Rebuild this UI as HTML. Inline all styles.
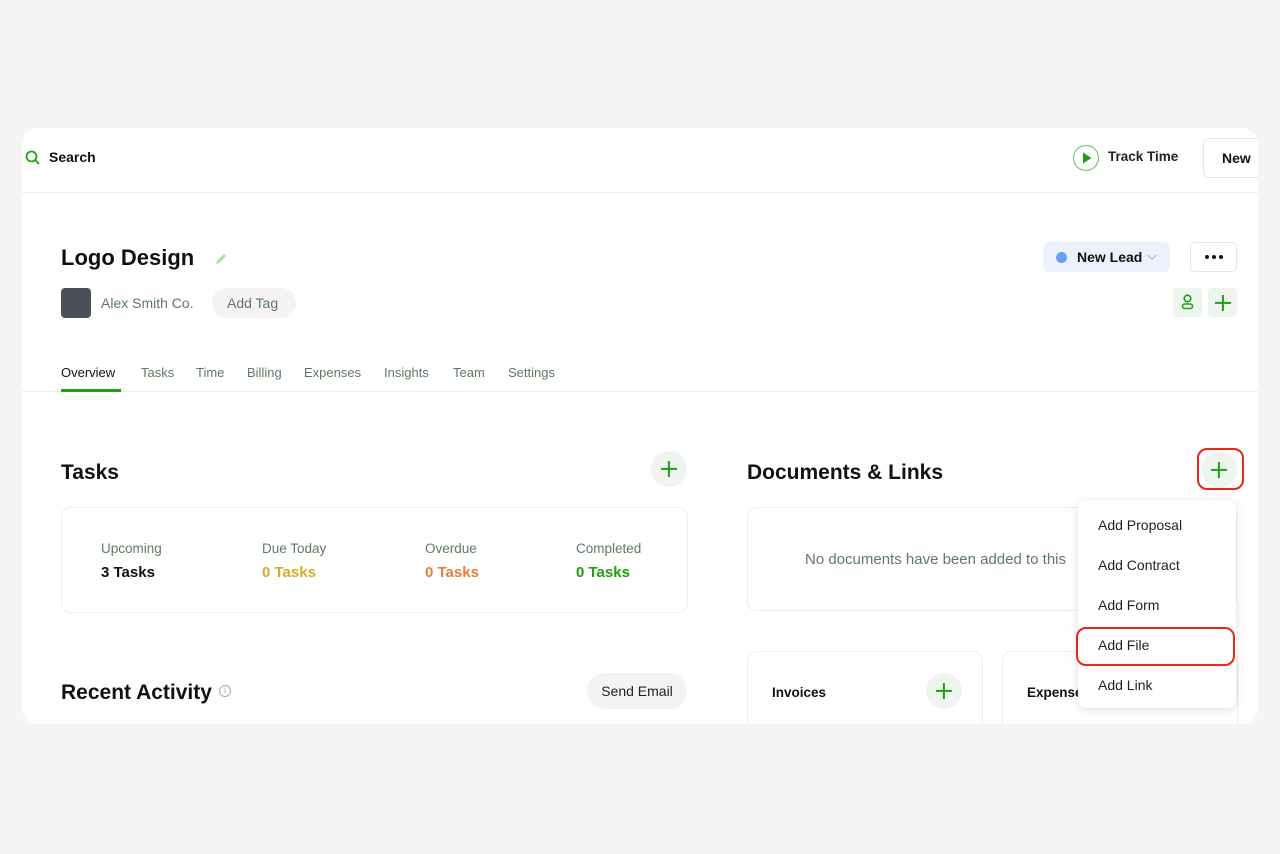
<!DOCTYPE html>
<html><head><style>
*{box-sizing:border-box;margin:0;padding:0}
body{width:1280px;height:854px;background:#f6f5f3;font-family:"Liberation Sans",sans-serif;position:relative;overflow:hidden;color:#111}
.a{position:absolute}
.card{left:22px;top:128px;width:1236px;height:596px;background:#fff;border-radius:16px;overflow:hidden}
.t{white-space:nowrap}
.g{color:#5e7a62}
.plus{border-radius:50%;background:#eef4ee;width:36px;height:36px}
.plus:before,.plus:after{content:"";position:absolute;background:#1fa012;left:50%;top:50%;transform:translate(-50%,-50%)}
.plus:before{width:16px;height:2.2px}.plus:after{width:2.2px;height:16px}
.box{border:1px solid #ececec;border-radius:10px;background:#fff}
.mi{left:20px;font-size:14px;color:#222}
</style></head><body>
<div class="a card">
 <svg class="a" style="left:3px;top:22px" width="16" height="16" viewBox="0 0 16 16"><circle cx="6.5" cy="6.5" r="5" fill="none" stroke="#1fa012" stroke-width="1.8"/><path d="M10 10l4 4" stroke="#1fa012" stroke-width="1.8"/></svg>
 <div class="a t" style="left:27px;top:21px;font-size:14px;font-weight:bold">Search</div>
 <svg class="a" style="left:1050px;top:16px" width="28" height="28" viewBox="0 0 28 28"><circle cx="14" cy="14" r="12.5" fill="none" stroke="#7dcb7a" stroke-width="1.3"/><path d="M11 8.5v11l8.5-5.5z" fill="#1fa012"/></svg>
 <div class="a t" style="left:1086px;top:21px;font-size:13.5px;font-weight:bold;color:#222">Track Time</div>
 <div class="a" style="left:1181px;top:10px;width:70px;height:40px;border:1px solid #e6e6e6;border-radius:6px;padding:11px 0 0 18px;font-size:14px;font-weight:bold">New</div>
 <div class="a" style="left:0;top:64px;width:1236px;height:1px;background:#eeeeee"></div>
 <div class="a t" style="left:39px;top:117px;font-size:22px;font-weight:bold">Logo Design</div>
 <svg class="a" style="left:192px;top:124px" width="14" height="14" viewBox="0 0 14 14"><path d="M2 12l1-3 7-7 2 2-7 7z" fill="#a8dca4"/></svg>
 <div class="a" style="left:39px;top:160px;width:30px;height:30px;background:#4b5058;border-radius:4px"></div>
 <div class="a t g" style="left:79px;top:167px;font-size:14px">Alex Smith Co.</div>
 <div class="a t g" style="left:190px;top:160px;width:84px;height:30px;background:#f3f3f3;border-radius:15px;padding:7px 0 0 15px;font-size:14px">Add Tag</div>
 <div class="a" style="left:1021px;top:114px;width:127px;height:30px;background:#ebf2fd;border-radius:6px"></div>
 <div class="a" style="left:1034px;top:124px;width:11px;height:11px;border-radius:50%;background:#6a9ff0"></div>
 <div class="a t" style="left:1055px;top:121px;font-size:14px;font-weight:bold">New Lead</div>
 <svg class="a" style="left:1125px;top:126px" width="10" height="7" viewBox="0 0 10 7"><path d="M1 1l4 4 4-4" fill="none" stroke="#b5b5b5" stroke-width="1.2"/></svg>
 <div class="a" style="left:1168px;top:114px;width:47px;height:30px;border:1px solid #e6e6e6;border-radius:5px"></div>
 <div class="a" style="left:1183px;top:127px;width:4px;height:4px;border-radius:50%;background:#111"></div>
 <div class="a" style="left:1190px;top:127px;width:4px;height:4px;border-radius:50%;background:#111"></div>
 <div class="a" style="left:1197px;top:127px;width:4px;height:4px;border-radius:50%;background:#111"></div>
 <div class="a" style="left:1151px;top:160px;width:29px;height:29px;background:#eef5ee;border-radius:4px"></div>
 <svg class="a" style="left:1157px;top:165px" width="17" height="18" viewBox="0 0 17 18"><circle cx="8.5" cy="5.5" r="3.3" fill="none" stroke="#1fa012" stroke-width="1.6"/><rect x="3.5" y="11" width="10" height="4.5" rx="2.2" fill="none" stroke="#1fa012" stroke-width="1.6"/></svg>
 <div class="a" style="left:1186px;top:160px;width:29px;height:29px;background:#eef5ee;border-radius:4px"></div>
 <div class="a plus" style="left:1186px;top:160px;width:29px;height:29px;background:none"></div>
 <div class="a t" style="left:39px;top:237px;font-size:13px;color:#111">Overview</div>
 <div class="a t g" style="left:119px;top:237px;font-size:13px">Tasks</div>
 <div class="a t g" style="left:174px;top:237px;font-size:13px">Time</div>
 <div class="a t g" style="left:225px;top:237px;font-size:13px">Billing</div>
 <div class="a t g" style="left:282px;top:237px;font-size:13px">Expenses</div>
 <div class="a t g" style="left:362px;top:237px;font-size:13px">Insights</div>
 <div class="a t g" style="left:431px;top:237px;font-size:13px">Team</div>
 <div class="a t g" style="left:486px;top:237px;font-size:13px">Settings</div>
 <div class="a" style="left:0;top:263px;width:1236px;height:1px;background:#eeeeee"></div>
 <div class="a" style="left:39px;top:261px;width:60px;height:3px;background:#1fa012"></div>
 <div class="a t" style="left:39px;top:333px;font-size:21px;font-weight:bold">Tasks</div>
 <div class="a plus" style="left:629px;top:323px"></div>
 <div class="a box" style="left:39px;top:379px;width:627px;height:106px"></div>
 <div class="a t g" style="left:79px;top:413px;font-size:13.5px">Upcoming</div>
 <div class="a t" style="left:79px;top:436px;font-size:15px;font-weight:bold">3 Tasks</div>
 <div class="a t g" style="left:240px;top:413px;font-size:13.5px">Due Today</div>
 <div class="a t" style="left:240px;top:436px;font-size:15px;font-weight:bold;color:#d4ae24">0 Tasks</div>
 <div class="a t g" style="left:403px;top:413px;font-size:13.5px">Overdue</div>
 <div class="a t" style="left:403px;top:436px;font-size:15px;font-weight:bold;color:#ee7a3c">0 Tasks</div>
 <div class="a t g" style="left:554px;top:413px;font-size:13.5px">Completed</div>
 <div class="a t" style="left:554px;top:436px;font-size:15px;font-weight:bold;color:#1fa012">0 Tasks</div>
 <div class="a t" style="left:39px;top:553px;font-size:21px;font-weight:bold">Recent Activity</div>
 <div class="a" style="left:197px;top:557px;width:12px;height:12px;border:1px solid #aaa;border-radius:50%;font-size:8px;color:#999;text-align:center;line-height:10px">i</div>
 <div class="a t" style="left:565px;top:545px;width:100px;height:36px;border-radius:18px;background:#f3f3f3;font-size:14px;text-align:center;line-height:36px;color:#222">Send Email</div>
 <div class="a t" style="left:725px;top:333px;font-size:21px;font-weight:bold">Documents &amp; Links</div>
 <div class="a plus" style="left:1179px;top:324px"></div>
 <div class="a" style="left:1175px;top:320px;width:47px;height:42px;border:2px solid #e8261a;border-radius:10px"></div>
 <div class="a box" style="left:725px;top:379px;width:490px;height:104px"></div>
 <div class="a t g" style="left:783px;top:423px;font-size:15px;width:274px;overflow:hidden">No documents have been added to this</div>
 <div class="a box" style="left:725px;top:523px;width:236px;height:100px"></div>
 <div class="a t" style="left:750px;top:557px;font-size:13.5px;font-weight:bold">Invoices</div>
 <div class="a plus" style="left:904px;top:545px"></div>
 <div class="a box" style="left:980px;top:523px;width:236px;height:100px"></div>
 <div class="a t" style="left:1005px;top:557px;font-size:13.5px;font-weight:bold">Expenses</div>
 <div class="a" style="left:1056px;top:372px;width:158px;height:208px;background:#fff;border-radius:8px;box-shadow:0 2px 10px rgba(0,0,0,.12)">
  <div class="a t mi" style="top:17px">Add Proposal</div>
  <div class="a t mi" style="top:57px">Add Contract</div>
  <div class="a t mi" style="top:97px">Add Form</div>
  <div class="a t mi" style="top:137px">Add File</div>
  <div class="a t mi" style="top:177px">Add Link</div>
 </div>
 <div class="a" style="left:1054px;top:499px;width:159px;height:39px;border:2px solid #e8261a;border-radius:10px"></div>
</div>
</body></html>
